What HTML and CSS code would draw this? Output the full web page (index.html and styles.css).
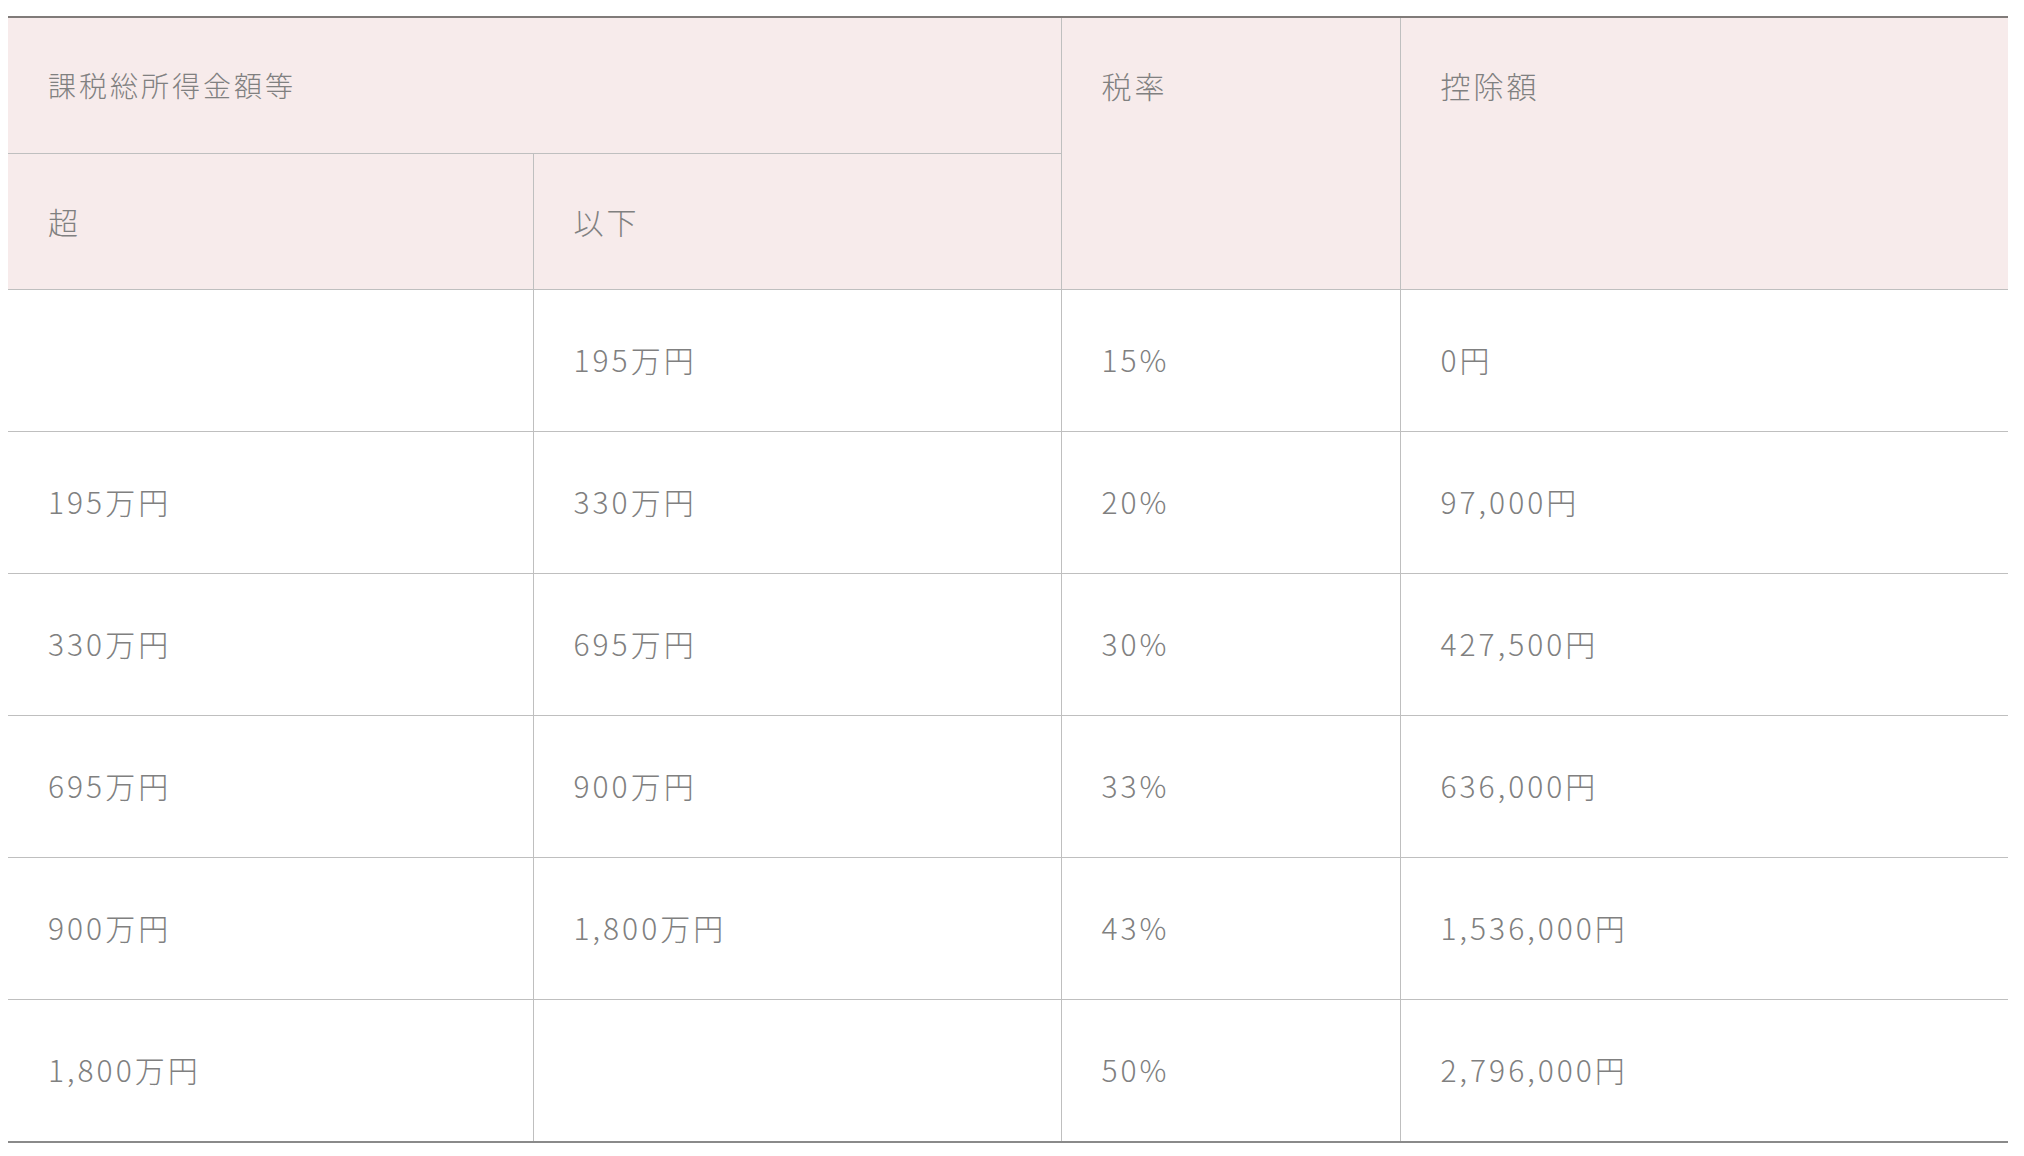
FILE: index.html
```html
<!DOCTYPE html>
<html lang="ja">
<head>
<meta charset="utf-8">
<title>税率表</title>
<link rel="stylesheet" href="styles.css">
</head>
<body>
<table class="tax-table">
  <colgroup>
    <col class="col-over">
    <col class="col-under">
    <col class="col-rate">
    <col class="col-deduct">
  </colgroup>
  <thead>
    <tr>
      <th colspan="2" class="group">課税総所得金額等</th>
      <th rowspan="2">税率</th>
      <th rowspan="2">控除額</th>
    </tr>
    <tr>
      <th>超</th>
      <th>以下</th>
    </tr>
  </thead>
  <tbody>
    <tr><td></td><td>195万円</td><td>15%</td><td>0円</td></tr>
    <tr><td>195万円</td><td>330万円</td><td>20%</td><td>97,000円</td></tr>
    <tr><td>330万円</td><td>695万円</td><td>30%</td><td>427,500円</td></tr>
    <tr><td>695万円</td><td>900万円</td><td>33%</td><td>636,000円</td></tr>
    <tr><td>900万円</td><td>1,800万円</td><td>43%</td><td>1,536,000円</td></tr>
    <tr><td>1,800万円</td><td></td><td>50%</td><td>2,796,000円</td></tr>
  </tbody>
</table>
</body>
</html>
```

FILE: styles.css
```css
html, body {
  background: #ffffff;
}
body {
  margin: 16px 8px 8px 8px;
  font-family: "Noto Sans CJK JP", "Noto Sans", sans-serif;
  font-weight: 300;
  color: #808080;
}
.tax-table {
  width: 2000px;
  table-layout: fixed;
  border-collapse: collapse;
  border-top: 2px solid #807b79;
  border-bottom: 2px solid #8a8a8a;
  font-size: 30px;
  letter-spacing: 3px;
  font-feature-settings: "palt";
}
.col-over { width: 525px; }
.col-under { width: 528px; }
.col-rate { width: 339px; }
.col-deduct { width: 608px; }

.tax-table th,
.tax-table td {
  text-align: left;
  font-weight: 300;
  padding: 0 40px;
  border: 1px solid #bfbfbf;
}
.tax-table tr > :first-child { border-left: none; }
.tax-table tr > :last-child { border-right: none; }

.tax-table th {
  background: #f7ebeb;
  vertical-align: top;
  padding-top: 40px;
  padding-bottom: 40px;
  line-height: 55px;
}
.tax-table th.group {
  font-size: 28px;
}
.tax-table td {
  vertical-align: middle;
  padding-top: 42px;
  padding-bottom: 44px;
  line-height: 55px;
}
```
